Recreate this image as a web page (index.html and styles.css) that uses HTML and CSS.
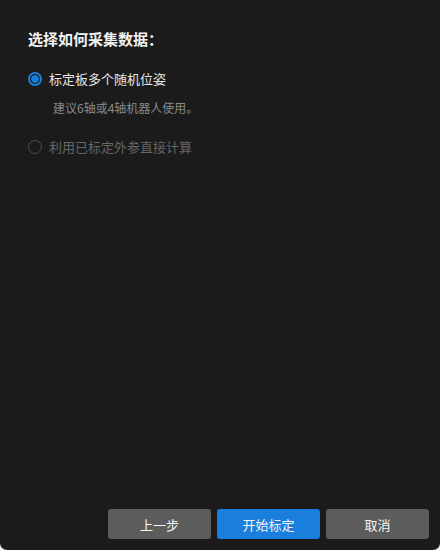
FILE: index.html
```html
<!DOCTYPE html>
<html lang="zh">
<head>
    <meta charset="UTF-8">
    <meta name="viewport" content="width=device-width, initial-scale=1.0">
    <title>选择如何采集数据</title>
    <link rel="stylesheet" href="styles.css">
</head>
<body>

    <div class="dialog">
        <div class="content">
            <h1>选择如何采集数据：</h1>

            <label class="option">
                <span class="radio checked"></span>
                <span>标定板多个随机位姿</span>
            </label>
            <p class="hint">建议6轴或4轴机器人使用。</p>

            <label class="option disabled">
                <span class="radio"></span>
                <span>利用已标定外参直接计算</span>
            </label>
        </div>

        <div class="footer">
            <button class="btn">上一步</button>
            <button class="btn primary">开始标定</button>
            <button class="btn">取消</button>
        </div>
    </div>

</body>
</html>
```

FILE: styles.css
```css
html, body {
    margin: 0;
    padding: 0;
    background-color: #f0f0f0;
}
body {
    font-family: "Noto Sans CJK SC", "Noto Sans", sans-serif;
}
.dialog {
    width: 440px;
    height: 550px;
    background-color: #1b1b1b;
    border-radius: 0 0 7px 7px;
    display: flex;
    flex-direction: column;
    box-sizing: border-box;
}
.content {
    flex: 1;
    padding: 27px 28px 0;
}
h1 {
    margin: 0 0 18px;
    font-size: 15px;
    font-weight: bold;
    color: #f2f2f2;
    line-height: 24px;
}
.option {
    display: flex;
    align-items: center;
    gap: 7px;
    font-size: 13px;
    color: #e6e6e6;
    line-height: 20px;
}
.option.disabled {
    color: #666;
}
.radio {
    width: 14px;
    height: 14px;
    border-radius: 50%;
    border: 1px solid #4e4e4e;
    box-sizing: border-box;
}
.radio.checked {
    border: 2px solid #1a7fdc;
    background: radial-gradient(circle, #1a7fdc 0 3.5px, #1b1b1b 4px);
}
.hint {
    margin: 10px 0 20px 25px;
    font-size: 12px;
    color: #8a8a8a;
    line-height: 18px;
}
.footer {
    display: flex;
    justify-content: flex-end;
    gap: 6px;
    padding: 0 11px 11px;
}
.btn {
    width: 103px;
    height: 30px;
    border: none;
    border-radius: 3px;
    background-color: #5c5c5c;
    color: #f5f5f5;
    font-family: inherit;
    font-size: 13px;
    cursor: pointer;
}
.btn.primary {
    background-color: #1a7fdc;
}
```
